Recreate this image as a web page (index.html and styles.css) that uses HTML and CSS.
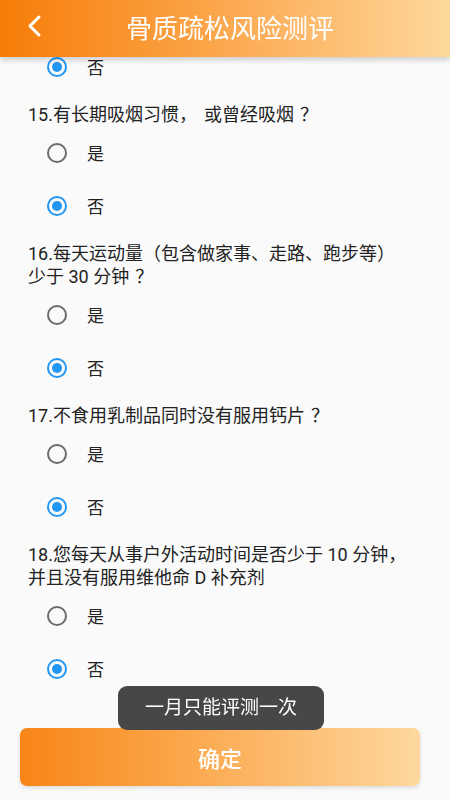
FILE: index.html
```html
<!DOCTYPE html>
<html lang="zh-CN">
<head>
    <meta charset="UTF-8">
    <meta name="viewport" content="width=device-width, initial-scale=1.0">
    <title>骨质疏松风险测评</title>
    <link rel="stylesheet" href="styles.css">
</head>
<body>

<div class="header">
    <a class="back" href="#">
        <svg width="16" height="22" viewBox="0 0 16 22"><path d="M13 2 L4 11 L13 20" fill="none" stroke="#fff" stroke-width="3" stroke-linecap="round" stroke-linejoin="round"/></svg>
    </a>
    <h1 class="title">骨质疏松风险测评</h1>
</div>

<div class="content">
    <label class="option"><span class="radio checked"></span>否</label>

    <div class="question">15.有长期吸烟习惯<span class="comma">，</span>或曾经吸烟<span class="qmark">？</span></div>
    <label class="option"><span class="radio"></span>是</label>
    <label class="option"><span class="radio checked"></span>否</label>

    <div class="question">16.每天运动量（包含做家事、走路、跑步等）少于 30 分钟<span class="qmark">？</span></div>
    <label class="option"><span class="radio"></span>是</label>
    <label class="option"><span class="radio checked"></span>否</label>

    <div class="question">17.不食用乳制品同时没有服用钙片<span class="qmark">？</span></div>
    <label class="option"><span class="radio"></span>是</label>
    <label class="option"><span class="radio checked"></span>否</label>

    <div class="question">18.您每天从事户外活动时间是否少于 10 分钟，并且没有服用维他命 D 补充剂</div>
    <label class="option"><span class="radio"></span>是</label>
    <label class="option"><span class="radio checked"></span>否</label>
</div>

<div class="footer">
    <div class="toast">一月只能评测一次</div>
    <button class="submit" type="button">确定</button>
</div>

</body>
</html>
```

FILE: styles.css
```css
body {
    margin: 0;
    background-color: #fafafa;
    font-family: Roboto, "Noto Sans CJK SC", sans-serif;
    color: #222222;
    height: 800px;
    overflow: hidden;
    text-spacing-trim: space-all;
}
.qmark {
    padding: 0 3px 0 6px;
}
.comma {
    padding-right: 7px;
}
.header {
    position: fixed;
    top: 0;
    left: 0;
    right: 0;
    height: 57px;
    display: flex;
    align-items: center;
    background: linear-gradient(90deg, #f77d08 0%, #fa9a38 35%, #fdbb6e 70%, #fdd89b 100%);
    box-shadow: 0 3px 6px rgba(0, 0, 0, 0.18);
    z-index: 2;
}
.back {
    display: flex;
    align-items: center;
    justify-content: center;
    width: 44px;
    height: 44px;
    margin-left: 12px;
    margin-top: -6px;
}
.title {
    flex: 1;
    margin: -4px 46px 0 0;
    text-align: center;
    color: #ffffff;
    font-size: 26px;
    font-weight: 400;
}
.content {
    padding: 40px 40px 0 28px;
}
.question {
    padding-top: 10px;
    font-size: 18px;
    line-height: 23px;
}
.option {
    display: flex;
    align-items: center;
    height: 53px;
    padding-left: 19px;
    font-size: 17px;
}
.radio {
    width: 16px;
    height: 16px;
    border: 2.5px solid #6b6b6b;
    border-radius: 50%;
    margin-right: 20px;
    position: relative;
}
.radio.checked {
    border-color: #2196f3;
}
.radio.checked::after {
    content: "";
    position: absolute;
    left: 3px;
    top: 3px;
    width: 10px;
    height: 10px;
    border-radius: 50%;
    background-color: #2196f3;
}
.footer {
    position: fixed;
    left: 0;
    right: 0;
    bottom: 0;
    height: 114px;
    display: flex;
    flex-direction: column;
    align-items: center;
    z-index: 3;
}
.toast {
    background-color: #474747;
    color: #ffffff;
    font-size: 19px;
    padding: 0 27px;
    height: 44px;
    line-height: 44px;
    border-radius: 9px;
    margin-left: -8px;
    position: relative;
    z-index: 1;
}
.submit {
    width: 400px;
    height: 58px;
    margin-top: -2px;
    margin-left: -10px;
    border: none;
    border-radius: 7px;
    background: linear-gradient(90deg, #f88517 0%, #fba64a 40%, #fdc37c 75%, #fdd89d 100%);
    color: #ffffff;
    font-family: Roboto, "Noto Sans CJK SC", sans-serif;
    font-size: 22px;
    font-weight: 500;
    box-shadow: 0 2px 4px rgba(0, 0, 0, 0.12);
}
```
